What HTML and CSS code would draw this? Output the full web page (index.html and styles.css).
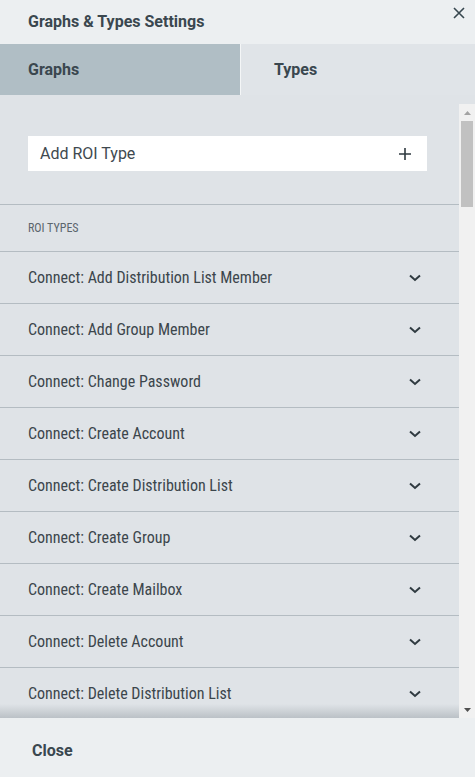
FILE: index.html
```html
<!DOCTYPE html>
<html>
<head>
<meta charset="utf-8">
<link rel="stylesheet" href="styles.css">
</head>
<body>
<div class="panel">
  <header class="header">
    <h1 class="title">Graphs &amp; Types Settings</h1>
    <svg class="close-x" width="12" height="12" viewBox="0 0 12 12"><path d="M1 1L11 11M11 1L1 11" stroke="#37474f" stroke-width="1.6" fill="none"/></svg>
  </header>
  <nav class="tabs">
    <div class="tab tab-active">Graphs</div>
    <div class="tab">Types</div>
  </nav>
  <main class="content">
    <div class="scroll">
      <div class="list">
        <div class="add-wrap">
          <div class="add-input">
            <span>Add ROI Type</span>
            <svg width="12" height="12" viewBox="0 0 12 12"><path d="M6 0V12M0 6H12" stroke="#2f3a40" stroke-width="1.6" fill="none"/></svg>
          </div>
        </div>
        <div class="section-head">ROI TYPES</div>
        <div class="row"><span>Connect: Add Distribution List Member</span><svg class="chev" width="12" height="8" viewBox="0 0 12 8"><path d="M1 1.5L6 6L11 1.5" stroke="#2f3a40" stroke-width="2" fill="none"/></svg></div>
        <div class="row"><span>Connect: Add Group Member</span><svg class="chev" width="12" height="8" viewBox="0 0 12 8"><path d="M1 1.5L6 6L11 1.5" stroke="#2f3a40" stroke-width="2" fill="none"/></svg></div>
        <div class="row"><span>Connect: Change Password</span><svg class="chev" width="12" height="8" viewBox="0 0 12 8"><path d="M1 1.5L6 6L11 1.5" stroke="#2f3a40" stroke-width="2" fill="none"/></svg></div>
        <div class="row"><span>Connect: Create Account</span><svg class="chev" width="12" height="8" viewBox="0 0 12 8"><path d="M1 1.5L6 6L11 1.5" stroke="#2f3a40" stroke-width="2" fill="none"/></svg></div>
        <div class="row"><span>Connect: Create Distribution List</span><svg class="chev" width="12" height="8" viewBox="0 0 12 8"><path d="M1 1.5L6 6L11 1.5" stroke="#2f3a40" stroke-width="2" fill="none"/></svg></div>
        <div class="row"><span>Connect: Create Group</span><svg class="chev" width="12" height="8" viewBox="0 0 12 8"><path d="M1 1.5L6 6L11 1.5" stroke="#2f3a40" stroke-width="2" fill="none"/></svg></div>
        <div class="row"><span>Connect: Create Mailbox</span><svg class="chev" width="12" height="8" viewBox="0 0 12 8"><path d="M1 1.5L6 6L11 1.5" stroke="#2f3a40" stroke-width="2" fill="none"/></svg></div>
        <div class="row"><span>Connect: Delete Account</span><svg class="chev" width="12" height="8" viewBox="0 0 12 8"><path d="M1 1.5L6 6L11 1.5" stroke="#2f3a40" stroke-width="2" fill="none"/></svg></div>
        <div class="row"><span>Connect: Delete Distribution List</span><svg class="chev" width="12" height="8" viewBox="0 0 12 8"><path d="M1 1.5L6 6L11 1.5" stroke="#2f3a40" stroke-width="2" fill="none"/></svg></div>
      </div>
      <div class="scrollbar">
        <div class="sb-arrow"><svg width="7" height="4" viewBox="0 0 7 4"><path d="M0 4L3.5 0L7 4Z" fill="#a3a3a3"/></svg></div>
        <div class="sb-track"><div class="sb-thumb"></div></div>
        <div class="sb-arrow"><svg width="7" height="4" viewBox="0 0 7 4"><path d="M0 0L3.5 4L7 0Z" fill="#505050"/></svg></div>
      </div>
    </div>
  </main>
  <footer class="footer">
    <span class="close-btn">Close</span>
  </footer>
</div>
</body>
</html>
```

FILE: styles.css
```css
* { box-sizing: border-box; }
html, body { margin: 0; padding: 0; }
body {
  width: 475px;
  height: 777px;
  overflow: hidden;
  background: #eceff1;
  font-family: Roboto, "Liberation Sans", sans-serif;
  color: #37474f;
}
.panel {
  display: flex;
  flex-direction: column;
  height: 777px;
}
.header {
  height: 44px;
  flex: none;
  display: flex;
  align-items: center;
  justify-content: space-between;
  padding: 0 10px 0 28px;
  background: #eceff1;
}
.title {
  margin: 0;
  font-size: 16px;
  font-weight: 700;
  color: #3a474f;
  padding-bottom: 1px;
}
.close-x {
  align-self: flex-start;
  margin-top: 7px;
}
.tabs {
  display: flex;
  height: 51px;
  flex: none;
}
.tab {
  flex: 1;
  display: flex;
  align-items: center;
  padding-left: 33px;
  font-size: 16px;
  font-weight: 700;
  color: #3a474f;
  background: #e0e4e8;
}
.tab-active {
  flex: none;
  width: 241px;
  padding-left: 28px;
  background: #b0bec5;
  border-right: 1px solid #f4f6f7;
}
.content {
  flex: 1;
  min-height: 0;
  background: #dfe3e7;
  padding-top: 9px;
  display: flex;
  flex-direction: column;
}
.scroll {
  flex: 1;
  min-height: 0;
  display: flex;
}
.list {
  flex: 1;
  min-width: 0;
  overflow: hidden;
  position: relative;
}
.add-wrap {
  padding: 32px 32px 33px 28px;
  border-bottom: 1px solid #b4bcc2;
}
.add-input {
  height: 35px;
  background: #fff;
  display: flex;
  align-items: center;
  justify-content: space-between;
  padding: 0 16px 0 12px;
  font-size: 16px;
  color: #40494f;
}
.section-head {
  height: 47px;
  display: flex;
  align-items: center;
  padding-left: 28px;
  font-size: 12px;
  color: #5b666d;
  border-bottom: 1px solid #b4bcc2;
  font-family: "Roboto Condensed", "Liberation Sans Narrow", Roboto, sans-serif;
}
.row {
  height: 52px;
  display: flex;
  align-items: center;
  justify-content: space-between;
  padding: 0 38px 0 28px;
  border-bottom: 1px solid #b4bcc2;
  font-size: 16px;
  color: #3c464c;
}
.row span {
  font-family: "Roboto Condensed", "Liberation Sans Narrow", Roboto, sans-serif;
}
.chev { flex: none; }
.list::after {
  content: "";
  position: absolute;
  left: 0;
  right: 0;
  bottom: 0;
  height: 14px;
  background: linear-gradient(to bottom, rgba(120,130,138,0), rgba(120,130,138,0.35));
}
.scrollbar {
  width: 16px;
  flex: none;
  background: #f1f1f1;
  display: flex;
  flex-direction: column;
}
.sb-arrow {
  height: 17px;
  display: flex;
  align-items: center;
  justify-content: center;
}
.sb-track {
  flex: 1;
  padding: 0 2px;
}
.sb-thumb {
  height: 86px;
  background: #c1c1c1;
}
.footer {
  height: 59px;
  flex: none;
  display: flex;
  align-items: center;
  padding: 5px 0 0 32px;
  background: #eceff1;
}
.close-btn {
  font-size: 16px;
  font-weight: 700;
  color: #3a474f;
}
```
